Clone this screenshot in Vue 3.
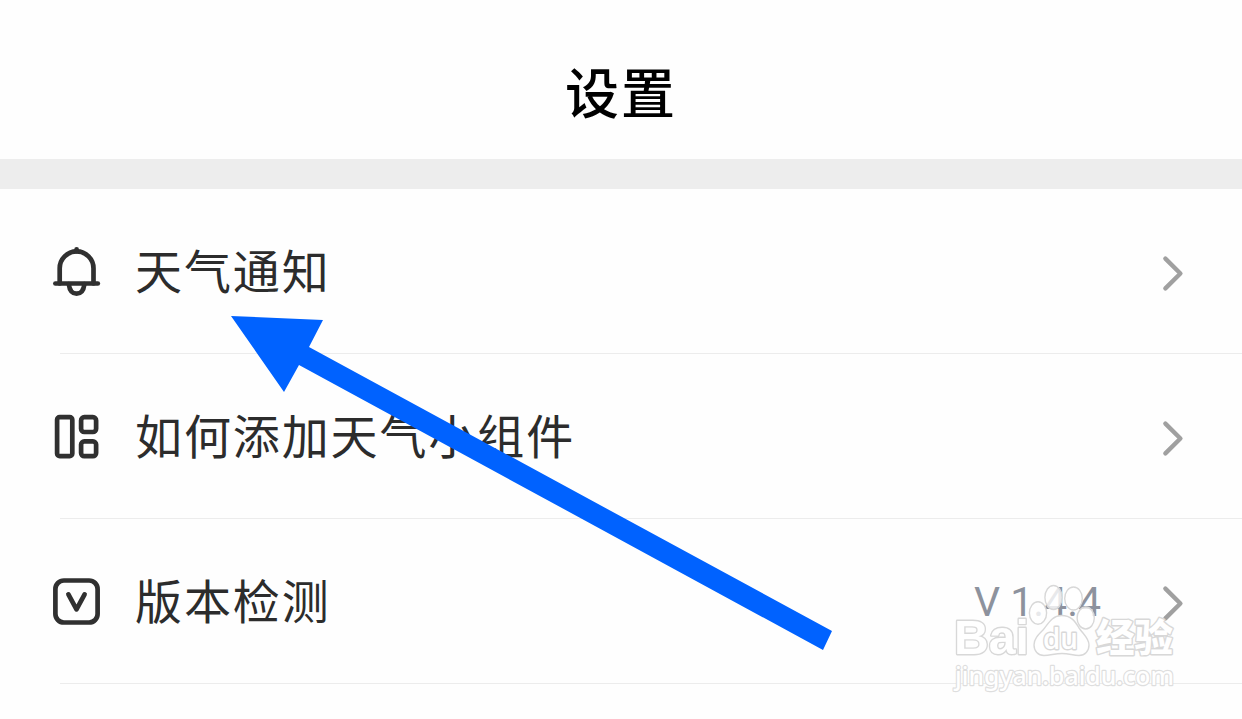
<template>
  <div class="settings-page">
    <header class="page-header">
      <h1 class="page-title">设置</h1>
    </header>

    <ul class="settings-list">
      <li v-for="item in items" :key="item.id" class="settings-item">
        <svg class="item-icon" viewBox="0 0 50 52" fill="none" stroke-linecap="round" stroke-linejoin="round">
          <g v-if="item.id === 'notice'">
            <path d="M8.7 37.5V22.3a16.9 16.9 0 0 1 33.8 0V37.5" />
            <path d="M4.4 37.5h42.4" />
            <path d="M17.8 38.2c.8 6.5 4 9.4 7.8 9.4s7-2.9 7.8-9.4" />
            <path d="M25.6 3.3v2" />
          </g>
          <g v-else-if="item.id === 'widget'">
            <rect x="6.1" y="6.2" width="15.2" height="39" rx="2.6" />
            <rect x="30.1" y="6.2" width="15" height="14.8" rx="3.2" />
            <rect x="30.1" y="30.4" width="15" height="14.8" rx="3.2" />
          </g>
          <g v-else>
            <rect x="4.4" y="4.5" width="42.2" height="42" rx="8.5" />
            <path d="M17.4 18.4l8.1 15 8.1-15" />
          </g>
        </svg>
        <span class="item-label">{{ item.label }}</span>
        <span v-if="item.value" class="item-value">{{ item.value }}</span>
        <svg class="item-arrow" viewBox="0 0 24 38">
          <path d="M4.4 4.6l15 14.9-15 14.9" />
        </svg>
      </li>
    </ul>

    <!-- pointer to the notification row -->
    <svg class="pointer" viewBox="0 0 1242 719">
      <polygon points="231,316 323,320 309,347 832,631 823,650 299,365 284,392" />
    </svg>

    <svg class="watermark" viewBox="940 575 250 125">
      <text class="mark-text mark-brand" x="954" y="654" textLength="75" lengthAdjust="spacingAndGlyphs">Bai</text>
      <g class="mark-paw">
        <ellipse cx="1038" cy="613" rx="8.6" ry="11.2" />
        <ellipse cx="1053.5" cy="597.5" rx="8.6" ry="12" />
        <ellipse cx="1073.5" cy="598.5" rx="8.8" ry="11.5" />
        <ellipse cx="1085.7" cy="618" rx="8.6" ry="11" />
        <path d="M1061.5 615.5C1052 615.5 1048 624 1043 630C1038 635 1034 639 1034 645C1034 651 1038 655.5 1044 655.5C1050 655.5 1055 653.5 1062 653.5C1069 653.5 1073 655.5 1079 655.5C1085 655.5 1089 651 1089 645C1089 638 1083 634 1079 628C1075 621 1071 615.5 1061.5 615.5Z" />
      </g>
      <text class="mark-text mark-du" x="1043" y="649" textLength="35" lengthAdjust="spacingAndGlyphs">du</text>
      <text class="mark-text mark-cn" x="1096" y="651" textLength="77" lengthAdjust="spacingAndGlyphs">经验</text>
      <text class="mark-text mark-url" x="955" y="685" textLength="219" lengthAdjust="spacingAndGlyphs">jingyan.baidu.com</text>
    </svg>
  </div>
</template>

<script setup>
const items = [
  { id: 'notice', label: '天气通知' },
  { id: 'widget', label: '如何添加天气小组件' },
  { id: 'version', label: '版本检测', value: 'V 1.4.4' }
];
</script>

<style>
body {
  margin: 0;
  background: #fefefe;
}
</style>

<style scoped>
.settings-page {
  position: relative;
  width: 1242px;
  height: 719px;
  overflow: hidden;
  background: #fefefe;
  font-family: "Noto Sans CJK SC", sans-serif;
}

.page-header {
  box-sizing: border-box;
  height: 189px;
  padding-top: 51px;
  border-bottom: 30px solid #ededed;
}

.page-title {
  margin: 0;
  color: #000;
  font-size: 54px;
  font-weight: 500;
  line-height: 80px;
  letter-spacing: 2px;
  text-align: center;
}

.settings-list {
  margin: 0;
  padding: 0;
  list-style: none;
}

.settings-item {
  display: flex;
  align-items: center;
  box-sizing: border-box;
  height: 165px;
  padding: 0 57px 0 51px;
  background: linear-gradient(#ececec, #ececec) 60px 100% / 1182px 1px no-repeat;
}

.item-icon {
  width: 50px;
  height: 52px;
  stroke: #303030;
  stroke-width: 4.7;
}

.item-label {
  flex: 1;
  margin: 0 0 6px 34px;
  color: #2c2c2c;
  font-size: 47px;
  line-height: 70px;
  letter-spacing: 1.9px;
}

.item-value {
  margin-right: 60px;
  color: #8d929d;
  font-family: Roboto, sans-serif;
  font-size: 41px;
  line-height: 60px;
}

.item-arrow {
  width: 24px;
  height: 38px;
  margin-top: 3px;
  fill: none;
  stroke: #a0a0a0;
  stroke-width: 4.4;
  stroke-linecap: round;
  stroke-linejoin: round;
}

.pointer {
  position: absolute;
  inset: 0;
  width: 1242px;
  height: 719px;
  fill: #0062ff;
}

.watermark {
  position: absolute;
  left: 940px;
  top: 575px;
  width: 250px;
  height: 125px;
}

.mark-paw {
  fill: #fff;
  fill-opacity: 0.8;
  stroke: #d8d8d8;
  stroke-width: 1.4;
}

/* outline sits behind the white letters */
.mark-text {
  fill: #fff;
  stroke: #d8d8d8;
  stroke-width: 2.8;
  stroke-linejoin: round;
  paint-order: stroke;
}

.mark-brand {
  font-family: "Liberation Sans", sans-serif;
  font-size: 49px;
  font-weight: bold;
}

.mark-du {
  font-family: "Open Sans", sans-serif;
  font-size: 29px;
  font-weight: 600;
}

.mark-cn {
  font-size: 38px;
  font-weight: 900;
}

.mark-url {
  font-family: "Noto Sans", sans-serif;
  font-size: 26px;
  font-weight: 500;
  stroke: #dedede;
  stroke-width: 2.4;
}
</style>
